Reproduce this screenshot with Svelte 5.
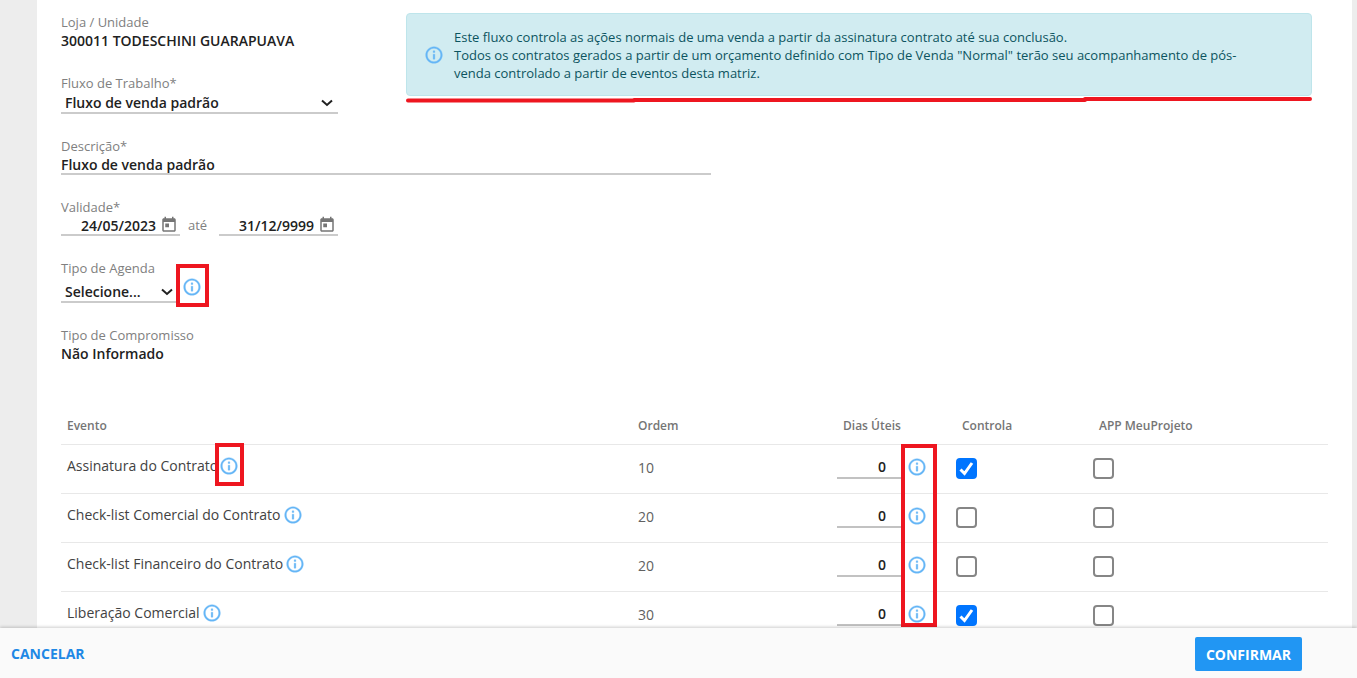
<script lang="ts">
  interface Evento {
    nome: string;
    ordem: number;
    dias: string;
    controla: boolean;
    app: boolean;
  }

  let fluxo = $state("Fluxo de venda padrão");
  let descricao = $state("Fluxo de venda padrão");
  let inicio = $state("24/05/2023");
  let fim = $state("31/12/9999");
  let agenda = $state("Selecione...");

  let eventos: Evento[] = $state([
    { nome: "Assinatura do Contrato", ordem: 10, dias: "0", controla: true, app: false },
    { nome: "Check-list Comercial do Contrato", ordem: 20, dias: "0", controla: false, app: false },
    { nome: "Check-list Financeiro do Contrato", ordem: 20, dias: "0", controla: false, app: false },
    { nome: "Liberação Comercial", ordem: 30, dias: "0", controla: true, app: false },
  ]);
</script>

{#snippet info()}
  <svg class="info" viewBox="0 0 24 24" aria-hidden="true">
    <path d="M11 7h2v2h-2zm0 4h2v6h-2zm1-9C6.48 2 2 6.48 2 12s4.48 10 10 10 10-4.48 10-10S17.52 2 12 2zm0 18c-4.41 0-8-3.59-8-8s3.59-8 8-8 8 3.59 8 8-3.59 8-8 8z" />
  </svg>
{/snippet}

{#snippet chevron()}
  <svg class="chevron" viewBox="0 0 12 8" aria-hidden="true">
    <path d="M1 1.5l5 4.5 5-4.5" />
  </svg>
{/snippet}

{#snippet calendar()}
  <svg viewBox="0 0 24 24" aria-hidden="true">
    <path d="M19 3h-1V1h-2v2H8V1H6v2H5c-1.11 0-1.99.9-1.99 2L3 19c0 1.1.89 2 2 2h14c1.1 0 2-.9 2-2V5c0-1.1-.9-2-2-2zm0 16H5V8h14v11zM7 10h5v5H7z" />
  </svg>
{/snippet}

<div class="page">
  <main>
    <div class="top">
      <div class="side">
        <div class="field">
          <span class="label">Loja / Unidade</span>
          <span class="value">300011 TODESCHINI GUARAPUAVA</span>
        </div>
        <div class="field">
          <label for="fluxo">Fluxo de Trabalho*</label>
          <div class="select">
            <select id="fluxo" bind:value={fluxo}>
              <option>Fluxo de venda padrão</option>
            </select>
            {@render chevron()}
          </div>
        </div>
      </div>

      <div class="notice">
        <div class="alert">
          {@render info()}
          <p>
            Este fluxo controla as ações normais de uma venda a partir da assinatura contrato até sua conclusão.<br />
            Todos os contratos gerados a partir de um orçamento definido com Tipo de Venda "Normal" terão seu acompanhamento de pós-venda controlado a partir de eventos desta matriz.
          </p>
        </div>
        <svg class="underline" viewBox="0 0 906 8" preserveAspectRatio="none" aria-hidden="true">
          <path d="M2 4.5H228M228 4H679M679 3H904" />
        </svg>
      </div>
    </div>

    <div class="field wide">
      <label for="descricao">Descrição*</label>
      <input id="descricao" class="text" type="text" bind:value={descricao} />
    </div>

    <div class="field">
      <label for="inicio">Validade*</label>
      <div class="dates">
        <div class="date">
          <input id="inicio" type="text" bind:value={inicio} />
          <button type="button" aria-label="Abrir calendário inicial">{@render calendar()}</button>
        </div>
        <label for="fim">até</label>
        <div class="date">
          <input id="fim" type="text" bind:value={fim} />
          <button type="button" aria-label="Abrir calendário final">{@render calendar()}</button>
        </div>
      </div>
    </div>

    <div class="field">
      <label for="agenda">Tipo de Agenda</label>
      <div class="agenda">
        <div class="select short">
          <select id="agenda" bind:value={agenda}>
            <option>Selecione...</option>
          </select>
          {@render chevron()}
        </div>
        <span class="marked">
          {@render info()}
          <span class="mark mark-agenda"></span>
        </span>
      </div>
    </div>

    <div class="field">
      <span class="label">Tipo de Compromisso</span>
      <span class="value">Não Informado</span>
    </div>

    <table>
      <colgroup>
        <col />
        <col class="c-ordem" />
        <col class="c-dias" />
        <col class="c-controla" />
        <col class="c-app" />
      </colgroup>
      <thead>
        <tr>
          <th>Evento</th>
          <th>Ordem</th>
          <th class="inset">Dias Úteis</th>
          <th class="inset">Controla</th>
          <th class="inset">APP MeuProjeto</th>
        </tr>
      </thead>
      <tbody>
        {#each eventos as evento, i}
          <tr>
            <td>
              <div class="nome">
                {evento.nome}
                <span class="marked" class:tight={i === 0}>
                  {@render info()}
                  {#if i === 0}<span class="mark mark-evento"></span>{/if}
                </span>
              </div>
            </td>
            <td class="ordem">{evento.ordem}</td>
            <td>
              <div class="dias">
                <input type="text" aria-label={`Dias úteis: ${evento.nome}`} bind:value={evento.dias} />
                <span class="marked">
                  {@render info()}
                  {#if i === 0}<span class="mark mark-dias"></span>{/if}
                </span>
              </div>
            </td>
            <td><input type="checkbox" aria-label={`Controla: ${evento.nome}`} bind:checked={evento.controla} /></td>
            <td><input type="checkbox" aria-label={`APP MeuProjeto: ${evento.nome}`} bind:checked={evento.app} /></td>
          </tr>
        {/each}
      </tbody>
    </table>
  </main>

  <footer>
    <button class="cancel" type="button">CANCELAR</button>
    <button class="confirm" type="button">CONFIRMAR</button>
  </footer>
</div>

<style>
  :global(body) {
    background: #ededed;
  }

  .page {
    display: flex;
    flex-direction: column;
    height: 100vh;
    overflow: hidden;
    font-family: "Open Sans", sans-serif;
    font-size: 14px;
    color: #212121;
  }

  .page * {
    box-sizing: border-box;
  }

  input,
  select,
  button {
    font: inherit;
    color: inherit;
    margin: 0;
    padding: 0;
    border: 0;
    border-radius: 0;
    background: transparent;
    outline: none;
  }

  button {
    cursor: pointer;
  }

  main {
    flex: 1;
    min-height: 0;
    overflow: hidden;
    display: flex;
    flex-direction: column;
    gap: 23px;
    margin: 0 5px 0 37px;
    padding: 13px 24px 0;
    background: #fff;
  }

  .top {
    display: flex;
    gap: 68px;
    height: 101px;
  }

  .side {
    display: flex;
    flex-direction: column;
    gap: 24px;
    flex: 0 0 277px;
  }

  .field {
    display: flex;
    flex-direction: column;
    align-items: flex-start;
    flex-shrink: 0;
  }

  label,
  .label {
    font-size: 13px;
    line-height: 18px;
    color: #808080;
  }

  .value {
    font-weight: 600;
    line-height: 19px;
  }

  .select {
    position: relative;
    width: 100%;
    height: 22px;
    border-bottom: 2px solid #cbcbcb;
  }

  .select select {
    appearance: none;
    width: 100%;
    height: 100%;
    padding: 0 20px 0 4px;
    font-weight: 600;
  }

  .chevron {
    position: absolute;
    right: 5px;
    bottom: 5px;
    width: 12px;
    height: 8px;
    fill: none;
    stroke: #212121;
    stroke-width: 2;
    pointer-events: none;
  }

  .notice {
    flex: 1;
    margin-right: 16px;
  }

  .alert {
    display: flex;
    align-items: center;
    gap: 10px;
    height: 83px;
    padding: 0 48px 0 17px;
    background: #d1ecf1;
    border: 1px solid #bee5eb;
    border-radius: 4px;
    color: #0c5460;
    font-size: 13px;
    font-weight: 500;
    line-height: 18px;
  }

  .alert p {
    margin: 0;
  }

  .underline {
    display: block;
    width: 100%;
    height: 8px;
    fill: none;
    stroke: #ee1620;
    stroke-width: 4;
    stroke-linecap: round;
  }

  .info {
    display: block;
    flex: none;
    width: 20px;
    height: 20px;
    fill: #64b5f6;
    stroke: #64b5f6;
    stroke-width: 0.4;
  }

  .wide {
    width: 650px;
    max-width: 100%;
  }

  .text {
    width: 100%;
    height: 20px;
    border-bottom: 2px solid #cbcbcb;
    font-weight: 600;
  }

  .dates {
    display: flex;
  }

  .dates label {
    width: 39px;
    padding-left: 8px;
  }

  .date {
    display: flex;
    align-items: center;
    width: 119px;
    height: 20px;
    border-bottom: 2px solid #cbcbcb;
  }

  .date input {
    flex: 1;
    min-width: 0;
    font-weight: 600;
    text-align: right;
  }

  .date button {
    width: 18px;
    height: 18px;
    margin: 0 2px 0 4px;
  }

  .date svg {
    display: block;
    fill: #757575;
  }

  .agenda {
    display: flex;
    height: 26px;
    gap: 4px;
  }

  .short {
    width: 117px;
    height: 26px;
    padding-top: 4px;
  }

  .marked {
    position: relative;
    flex: none;
  }

  .mark {
    position: absolute;
    border: 4px solid #ee1620;
    pointer-events: none;
  }

  .mark-agenda {
    top: -13px;
    left: -6px;
    width: 33px;
    height: 43px;
  }

  .mark-evento {
    top: -13px;
    left: -4px;
    width: 29px;
    height: 43px;
  }

  .mark-dias {
    top: -13px;
    left: -6px;
    width: 36px;
    height: 183px;
    z-index: 1;
  }

  table {
    width: 100%;
    margin-top: 22px;
    table-layout: fixed;
    border-collapse: collapse;
  }

  .c-ordem {
    width: 199px;
  }

  .c-dias {
    width: 119px;
  }

  .c-controla {
    width: 137px;
  }

  .c-app {
    width: 241px;
  }

  th {
    height: 36px;
    padding: 0 6px;
    font-size: 12px;
    font-weight: 600;
    text-align: left;
    color: #757575;
  }

  th.inset {
    padding-left: 12px;
  }

  td {
    height: 49px;
    padding: 0 6px;
    border-top: 1px solid #e8e8e8;
  }

  .nome {
    display: flex;
    align-items: center;
    gap: 2px;
    padding-bottom: 6px;
    color: #424242;
  }

  .nome .tight {
    margin-left: -1px;
  }

  .ordem {
    padding-bottom: 2px;
    color: #616161;
  }

  .dias {
    display: flex;
    align-items: center;
    gap: 2px;
    padding-bottom: 4px;
  }

  .dias input {
    width: 68px;
    height: 22px;
    margin-top: 2px;
    padding-right: 19px;
    border-bottom: 2px solid #c2c2c2;
    font-weight: 600;
    text-align: right;
  }

  td input[type="checkbox"] {
    appearance: none;
    display: block;
    width: 21px;
    height: 21px;
    border: 2px solid #868686;
    border-radius: 4px;
  }

  td input[type="checkbox"]:checked {
    border-color: #0075ff;
    background: #0075ff url("data:image/svg+xml,%3Csvg xmlns='http://www.w3.org/2000/svg' viewBox='0 0 17 17'%3E%3Cpath d='M2.500 9.500l4 4L14 3' fill='none' stroke='white' stroke-width='3'/%3E%3C/svg%3E") center / 17px 17px no-repeat;
  }

  footer {
    display: flex;
    align-items: center;
    justify-content: space-between;
    flex: none;
    height: 50px;
    padding: 2px 55px 0 11px;
    background: #fafafa;
    box-shadow: 0 -1px 3px #0003;
    z-index: 1;
  }

  footer button {
    height: 34px;
    padding-bottom: 1px;
    font-weight: 700;
  }

  .cancel {
    color: #1e88e5;
  }

  .confirm {
    padding: 0 11px;
    border-radius: 2px;
    background: #2196f3;
    color: #fff;
  }
</style>
